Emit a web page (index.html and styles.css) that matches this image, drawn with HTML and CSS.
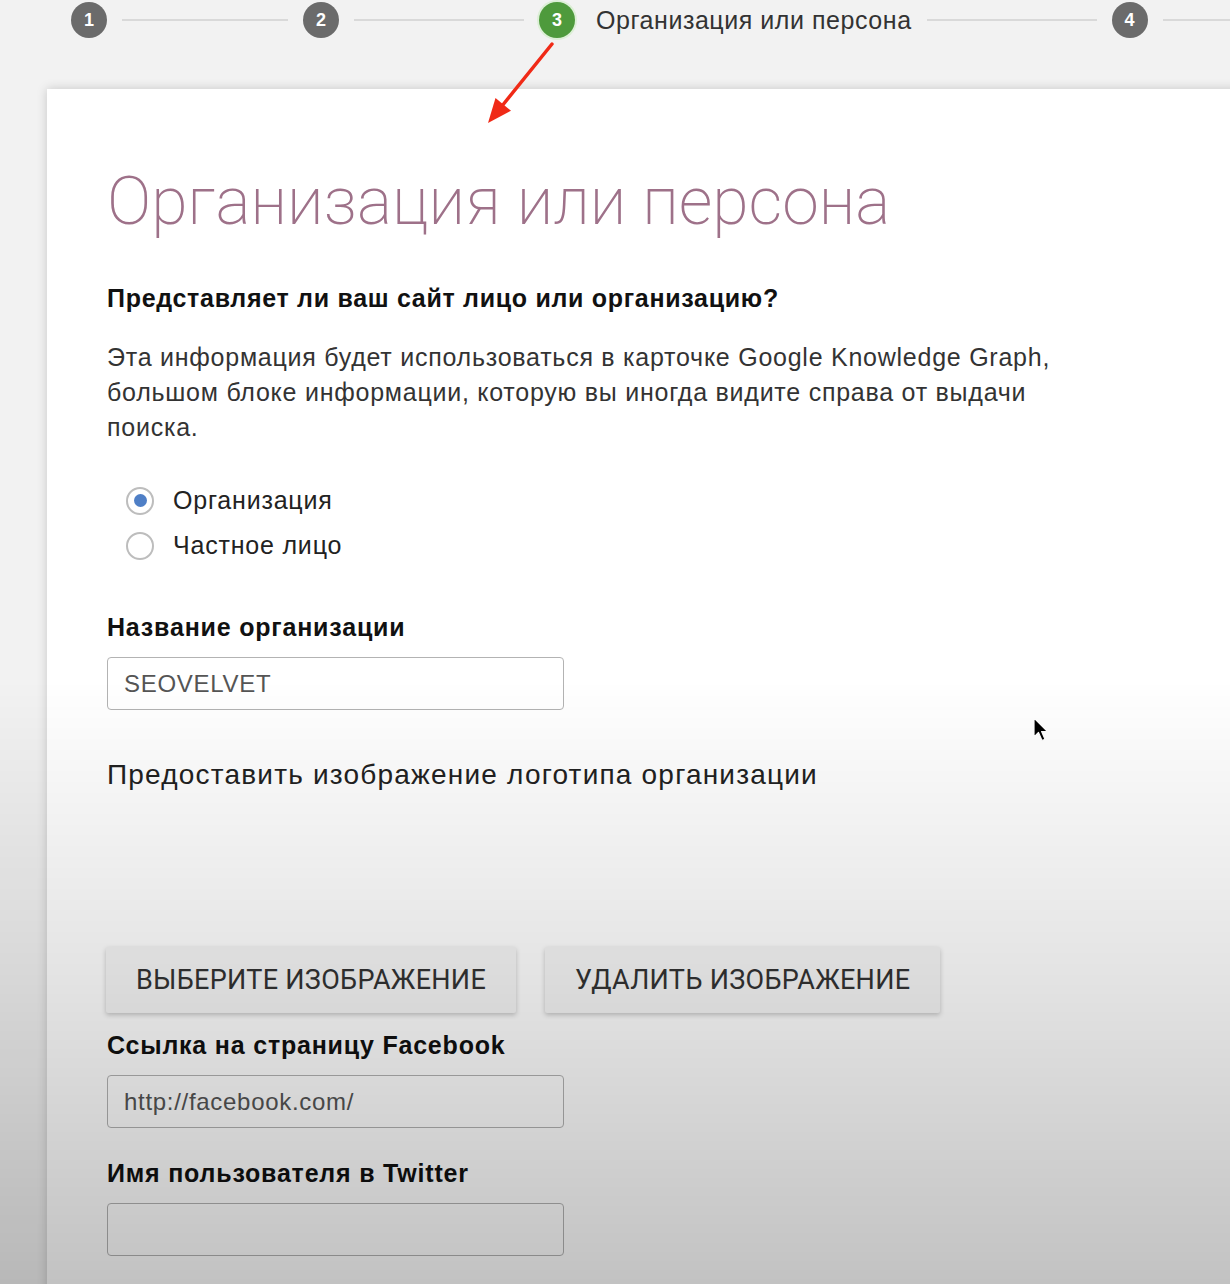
FILE: index.html
```html
<!DOCTYPE html>
<html lang="ru">

<head>
    <meta charset="UTF-8">
    <meta name="viewport" content="width=device-width, initial-scale=1.0">
    <title>Организация или персона</title>
    <link rel="stylesheet" href="styles.css">
</head>

<body>
    <!-- шаги мастера настройки -->
    <div class="stepper">
        <span class="step">1</span>
        <span class="step-line"></span>
        <span class="step">2</span>
        <span class="step-line wide"></span>
        <span class="step active">3</span>
        <span class="step-title">Организация или персона</span>
        <span class="step-line wide"></span>
        <span class="step">4</span>
        <span class="step-line last"></span>
    </div>

    <div class="card">
        <h1 class="title">Организация или персона</h1>

        <p class="question">Представляет ли ваш сайт лицо или организацию?</p>
        <p class="desc">Эта информация будет использоваться в карточке Google Knowledge Graph, большом блоке информации, которую вы иногда видите справа от выдачи поиска.</p>

        <div class="radios">
            <label class="radio-row"><input type="radio" name="type" checked> Организация</label>
            <label class="radio-row"><input type="radio" name="type"> Частное лицо</label>
        </div>

        <label class="field-label" for="org">Название организации</label>
        <input class="field" id="org" value="SEOVELVET">

        <p class="logo-label">Предоставить изображение логотипа организации</p>

        <div class="buttons">
            <button class="btn">Выберите изображение</button>
            <button class="btn">Удалить изображение</button>
        </div>

        <label class="field-label fb" for="fb">Ссылка на страницу Facebook</label>
        <input class="field" id="fb" value="http://facebook.com/">

        <label class="field-label tw" for="tw">Имя пользователя в Twitter</label>
        <input class="field" id="tw">
    </div>

    <!-- стрелка-указатель и курсор из записи экрана -->
    <svg class="arrow" viewBox="480 40 80 90" width="80" height="90">
        <line x1="552" y1="44" x2="502" y2="106" stroke="#f02a17" stroke-width="3.5" stroke-linecap="round" />
        <polygon points="488,123 511,110.7 495.5,98.1" fill="#f02a17" />
    </svg>
    <svg class="cursor" viewBox="0 0 16 26" width="16" height="26">
        <path d="M1 1 L1 20 L5.5 15.5 L9 23.5 L12 22.2 L8.6 14.5 L14.5 14.5 Z" fill="#000" stroke="#fff" stroke-width="1.2" stroke-linejoin="round" />
    </svg>
</body>

</html>
```

FILE: styles.css
```css
html,
body {
    margin: 0;
    overflow: hidden;
}

body {
    background: #f2f2f2;
    font-family: "Liberation Sans", Arial, sans-serif;
    color: #222;
    position: relative;
    height: 1284px;
}

/* затемнение нижней части кадра */
body::after {
    content: "";
    position: fixed;
    left: 0;
    top: 0;
    right: 0;
    bottom: 0;
    background: linear-gradient(to bottom, rgba(0, 0, 0, 0) 0, rgba(0, 0, 0, 0) 680px, rgba(0, 0, 0, 0.11) 980px, rgba(0, 0, 0, 0.24) 1284px);
    pointer-events: none;
}

.stepper {
    display: flex;
    align-items: center;
    height: 40px;
    padding-left: 71px;
    gap: 15px;
}

.step {
    flex: none;
    width: 36px;
    height: 36px;
    border-radius: 50%;
    background: #6b6b6b;
    color: #fff;
    font-weight: bold;
    font-size: 18px;
    display: flex;
    align-items: center;
    justify-content: center;
}

.step.active {
    background: #4e9a3c;
    box-shadow: 0 0 0 2px #dcefd6;
}

.step-title {
    font-size: 25px;
    letter-spacing: 0.55px;
    color: #333;
    margin-left: 6px;
}

.step-line {
    flex: none;
    width: 166px;
    height: 2px;
    background: #d9d9d9;
}

.step-line.wide {
    width: 170px;
}

.step-line.last {
    flex: 1;
}

.card {
    margin: 49px -20px 0 47px;
    padding: 74px 0 40px 60px;
    background: #fff;
    box-shadow: 0 0 10px rgba(0, 0, 0, 0.18);
}

.title {
    margin: 0;
    font-family: Roboto, sans-serif;
    font-weight: 200;
    font-size: 66px;
    line-height: 78px;
    color: #9e7189;
}

.question {
    margin: 42px 0 0;
    font-weight: bold;
    font-size: 25px;
    letter-spacing: 0.7px;
    line-height: 30px;
    color: #111;
}

.desc {
    margin: 27px 0 0;
    max-width: 980px;
    font-size: 25px;
    letter-spacing: 0.75px;
    line-height: 35px;
    color: #333;
}

.radios {
    margin-top: 33px;
    padding-left: 19px;
}

.radio-row {
    display: flex;
    align-items: center;
    gap: 19px;
    height: 45px;
    font-size: 25px;
    letter-spacing: 0.8px;
    color: #222;
}

.radio-row input {
    appearance: none;
    margin: 0;
    width: 28px;
    height: 28px;
    border: 2px solid #bdbdbd;
    border-radius: 50%;
    background: #fff;
    display: flex;
    align-items: center;
    justify-content: center;
}

.radio-row input:checked::before {
    content: "";
    width: 13px;
    height: 13px;
    border-radius: 50%;
    background: #4f7fc6;
}

.field-label {
    display: block;
    margin-top: 44px;
    font-weight: bold;
    font-size: 25px;
    letter-spacing: 0.8px;
    line-height: 30px;
    color: #111;
}

.field-label.fb {
    margin-top: 17px;
}

.field-label.tw {
    margin-top: 30px;
}

.field {
    display: block;
    box-sizing: border-box;
    margin-top: 15px;
    width: 457px;
    height: 53px;
    padding: 0 16px;
    border: 1.5px solid #b3b3b3;
    border-radius: 4px;
    background: transparent;
    font-family: "Liberation Sans", Arial, sans-serif;
    font-size: 24px;
    letter-spacing: 0.7px;
    color: #555;
}

.logo-label {
    margin: 48px 0 0;
    font-size: 28px;
    letter-spacing: 1.2px;
    line-height: 34px;
    color: #222;
}

.buttons {
    display: flex;
    gap: 29px;
    margin-top: 155px;
    margin-left: -1px;
}

.btn {
    height: 66px;
    padding: 0 30px;
    border: none;
    border-radius: 2px;
    background: #f6f6f6;
    box-shadow: 0 2px 5px rgba(0, 0, 0, 0.22);
    font-family: Roboto, sans-serif;
    font-size: 27px;
    letter-spacing: 0.3px;
    text-transform: uppercase;
    color: #333;
}

.arrow {
    position: absolute;
    left: 480px;
    top: 40px;
}

.cursor {
    position: absolute;
    left: 1033px;
    top: 717px;
}
```
